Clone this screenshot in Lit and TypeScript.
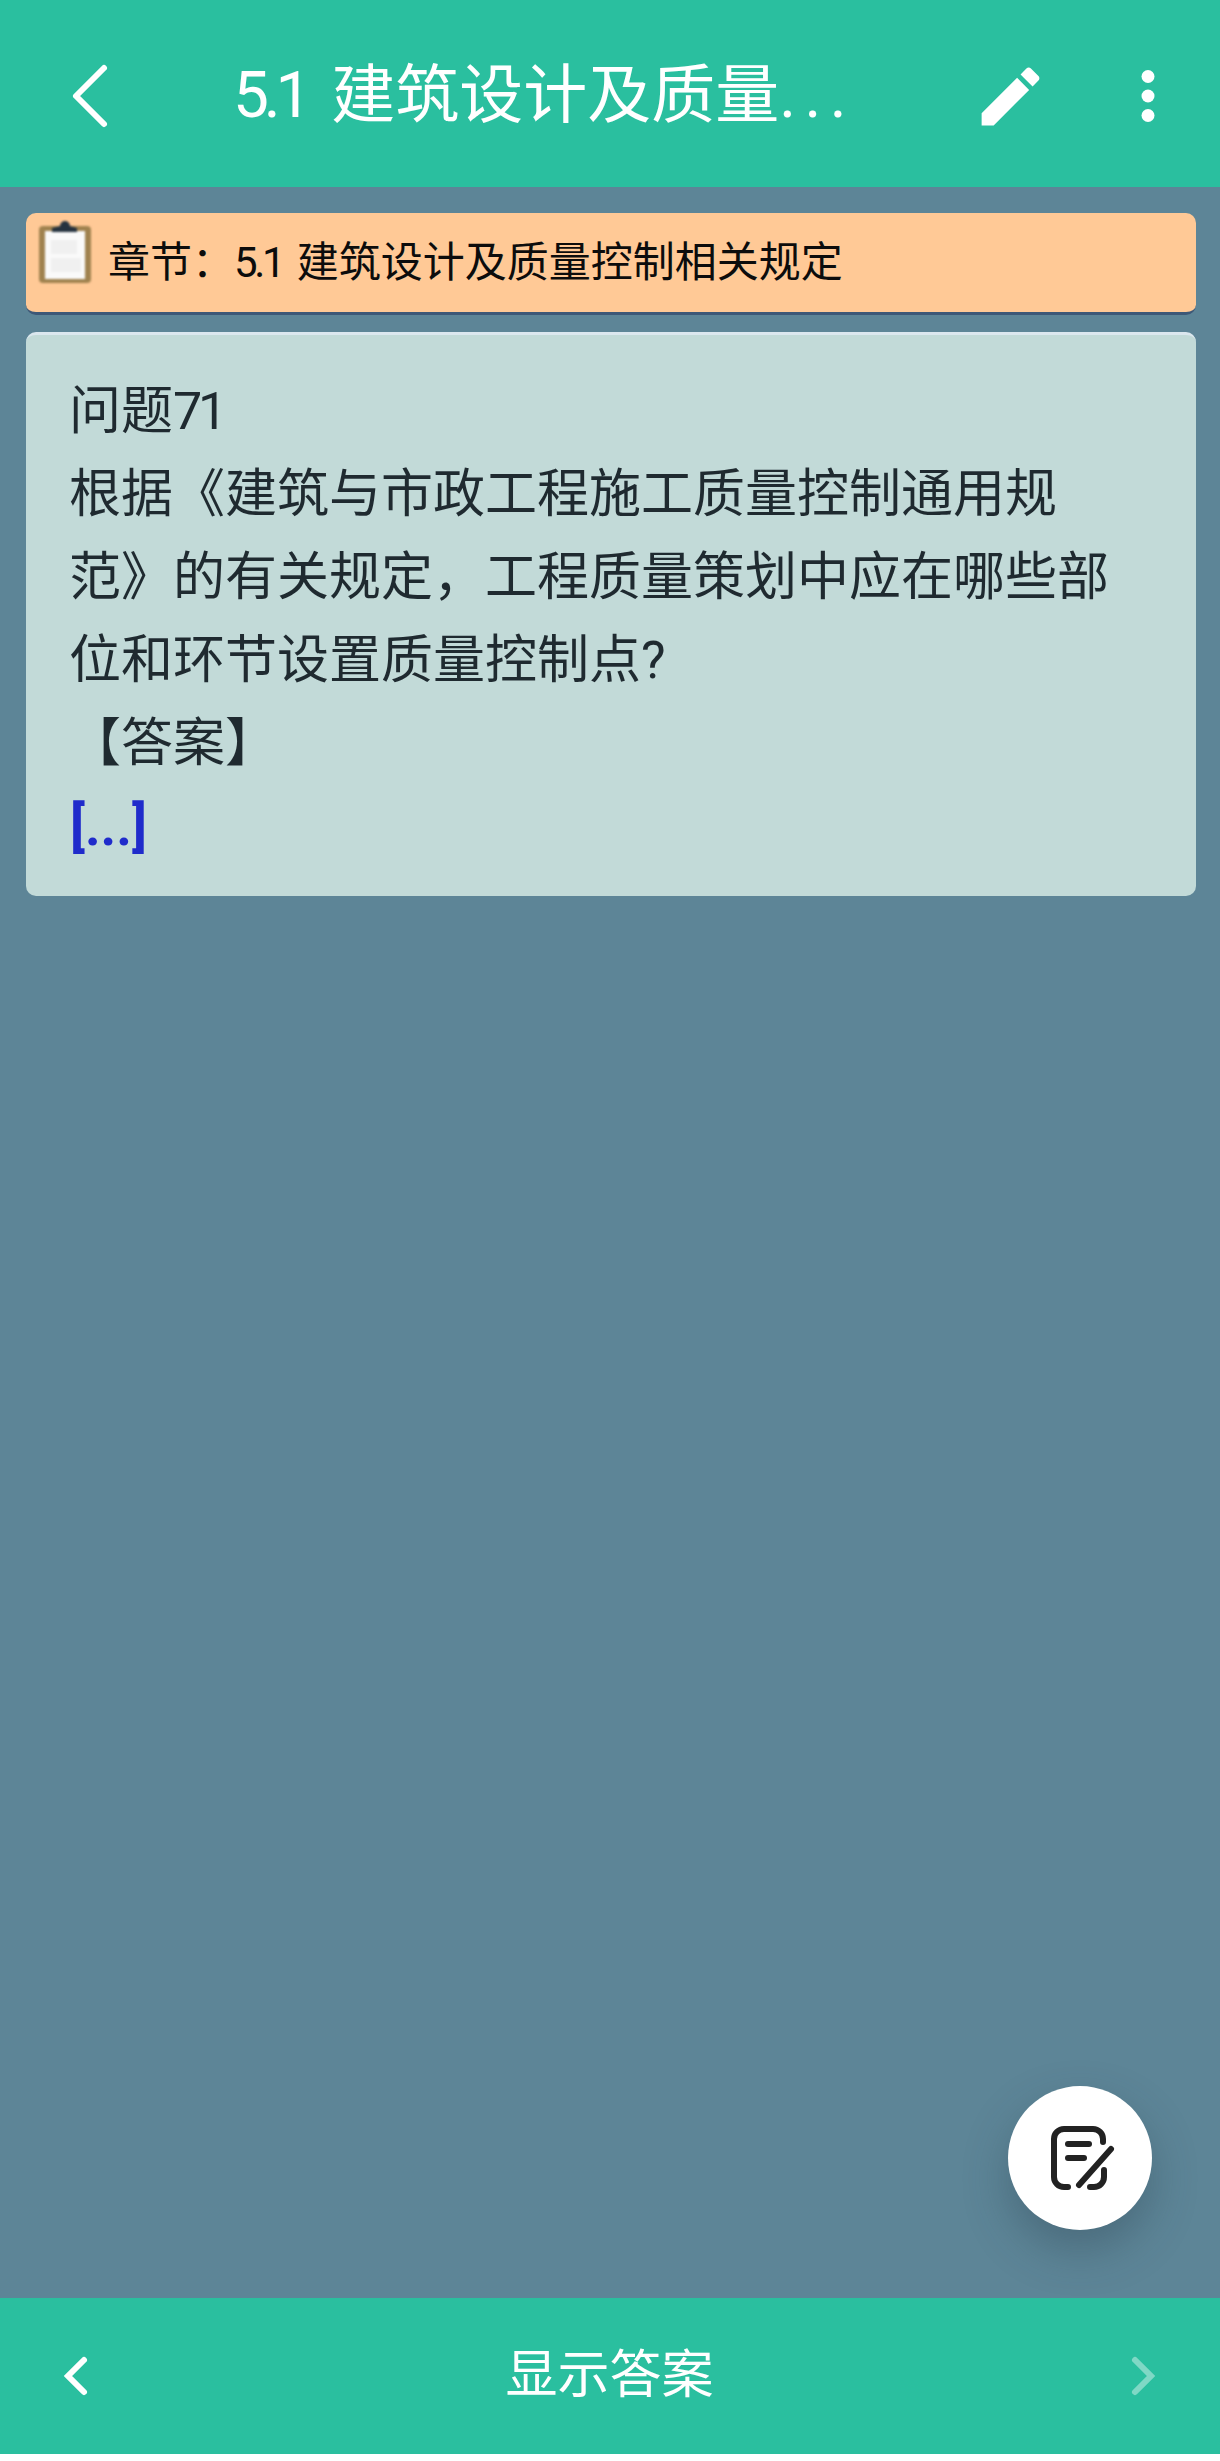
import { LitElement, html, css } from "lit";
import { customElement } from "lit/decorators.js";

@customElement("app-root")
export class AppRoot extends LitElement {
  static styles = css`
    :host {
      display: block;
      width: 1220px;
      height: 2461px;
      background: #ffffff;
      font-family: "Roboto", "Noto Sans CJK SC", sans-serif;
      text-spacing-trim: space-all;
    }
    .screen {
      position: relative;
      height: 2454px;
      display: flex;
      flex-direction: column;
      background: #5d8597;
    }
    .num {
      letter-spacing: -0.08em;
    }
    .header {
      flex: none;
      box-sizing: border-box;
      height: 187px;
      padding-top: 5px;
      background: #2abf9f;
      color: #ffffff;
      display: flex;
      align-items: center;
    }
    .back {
      flex: none;
      width: 44px;
      height: 72px;
      margin-left: 68px;
    }
    .title {
      flex: none;
      margin-left: 121px;
      width: 643px;
      font-size: 64px;
      line-height: 84px;
      white-space: nowrap;
      word-spacing: 0.14em;
    }
    .title .dim {
      letter-spacing: 0.13em;
    }
    .pencil {
      flex: none;
      width: 77px;
      height: 77px;
      margin-left: 96px;
    }
    .dots {
      flex: none;
      width: 20px;
      height: 66px;
      margin-left: 89px;
    }
    .content {
      flex: 1;
      padding: 26px 24px 0 26px;
      display: flex;
      flex-direction: column;
      gap: 17px;
    }
    .chapter {
      box-sizing: border-box;
      height: 102px;
      background: #ffc996;
      border-radius: 10px;
      border-bottom: 3px solid #3d5877;
      display: flex;
      color: #0c0c0c;
      font-size: 42px;
      line-height: 100px;
      word-spacing: 0.1em;
    }
    .clip {
      flex: none;
      width: 56px;
      height: 68px;
      margin: 4px 0 0 11px;
      filter: blur(0.8px);
    }
    .chapter span.label {
      margin-left: 15px;
    }
    .question {
      box-sizing: border-box;
      height: 564px;
      background: #c2dad8;
      border-radius: 10px;
      border-top: 3px solid #dbe7ee;
      padding: 35px 44px 0 43px;
      color: #1f2a30;
      font-size: 52px;
      line-height: 83px;
    }
    .more {
      display: block;
      color: #1f2bcb;
      font-weight: 700;
      font-size: 54px;
      margin-left: 1px;
      font-family: "Roboto", sans-serif;
    }
    .footer {
      flex: none;
      height: 156px;
      background: #2abf9f;
      color: #ffffff;
      display: flex;
      align-items: center;
      justify-content: space-between;
      padding: 0 55px 0 54px;
    }
    .footer svg {
      width: 48px;
      height: 48px;
    }
    .footer .off {
      opacity: 0.4;
    }
    .answer {
      font-size: 52px;
      line-height: 72px;
    }
    .fab {
      position: absolute;
      left: 1008px;
      top: 2086px;
      width: 144px;
      height: 144px;
      border-radius: 50%;
      background: #ffffff;
      box-shadow: 0 20px 44px rgba(40, 60, 75, 0.35);
      display: flex;
      align-items: center;
      justify-content: center;
    }
    .fab svg {
      width: 72px;
      height: 72px;
    }
  `;

  render() {
    return html`
      <div class="screen">
        <header class="header">
          <svg class="back" viewBox="0 0 44 72" fill="none" stroke="currentColor" stroke-width="6" stroke-linecap="round" stroke-linejoin="round">
            <polyline points="36,8 8,36 36,64"></polyline>
          </svg>
          <div class="title"><span class="num">5.1</span> 建筑设计及质量<span class="dim">...</span></div>
          <svg class="pencil" viewBox="0 0 24 24" fill="currentColor">
            <path d="M3 17.25V21h3.75L17.81 9.94l-3.75-3.75L3 17.25zM20.71 7.04c.39-.39.39-1.02 0-1.41l-2.34-2.34c-.39-.39-1.02-.39-1.41 0l-1.83 1.83 3.75 3.75 1.83-1.83z"></path>
          </svg>
          <svg class="dots" viewBox="0 0 20 66" fill="currentColor">
            <circle cx="10" cy="13.5" r="6.5"></circle>
            <circle cx="10" cy="33" r="6.5"></circle>
            <circle cx="10" cy="52.5" r="6.5"></circle>
          </svg>
        </header>

        <main class="content">
          <div class="chapter">
            <!-- clipboard badge -->
            <svg class="clip" viewBox="0 0 56 68">
              <rect x="2" y="9" width="52" height="57" rx="4" fill="#a0824f"></rect>
              <rect x="8" y="14" width="40" height="48" fill="#fafafa"></rect>
              <rect x="14" y="23" width="26" height="14" fill="#f0f0f0"></rect>
              <rect x="14" y="41" width="30" height="14" fill="#f0f0f0"></rect>
              <path d="M15 15 V11 L23 9 A5 5 0 0 1 33 9 L40 11 V15 Z" fill="#25323f"></path>
            </svg>
            <span class="label">章节：<span class="num">5.1</span> 建筑设计及质量控制相关规定</span>
          </div>
          <div class="question">
            问题<span class="num">71</span><br />
            根据《建筑与市政工程施工质量控制通用规范》的有关规定，工程质量策划中应在哪些部位和环节设置质量控制点?<br />
            【答案】
            <span class="more">[...]</span>
          </div>
        </main>

        <footer class="footer">
          <svg viewBox="0 0 48 48" fill="none" stroke="currentColor" stroke-width="6" stroke-linecap="round" stroke-linejoin="miter">
            <polyline points="30,8 14,24 30,40"></polyline>
          </svg>
          <div class="answer">显示答案</div>
          <svg class="off" viewBox="0 0 48 48" fill="none" stroke="currentColor" stroke-width="6" stroke-linecap="round" stroke-linejoin="miter">
            <polyline points="18,8 34,24 18,40"></polyline>
          </svg>
        </footer>

        <div class="fab">
          <svg viewBox="0 0 72 72" fill="none" stroke="#222222" stroke-width="6" stroke-linecap="round">
            <path d="M59 20 V17 A10 10 0 0 0 49 7 H20 A10 10 0 0 0 10 17 V55 A10 10 0 0 0 20 65 H24"></path>
            <path d="M46 65 H50 A10 10 0 0 0 60 55 V48"></path>
            <path d="M24 22 H45"></path>
            <path d="M24 36 H40"></path>
            <path d="M35 63 L67 27"></path>
          </svg>
        </div>
      </div>
    `;
  }
}
